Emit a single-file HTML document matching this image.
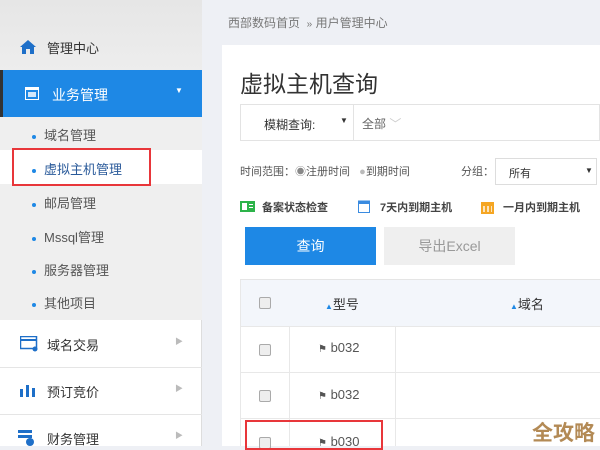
<!DOCTYPE html><html><head><meta charset="utf-8"><style>
*{margin:0;padding:0;box-sizing:border-box}
body{width:600px;height:446px;overflow:hidden;position:relative;background:#eef0f5;font-family:"Liberation Sans","Noto Sans CJK SC",sans-serif;color:#333}
.a{position:absolute}
.side{left:0;top:0;width:202px;height:446px;background:#fff;border-right:1px solid #ddd}
.sub{font-size:13px;color:#555}
.dot{display:inline-block;width:4px;height:4px;background:#1e88e5;border-radius:50%;margin-right:8px;vertical-align:middle}
.arr{color:#bbb;font-size:8px}
.cb{width:12px;height:12px;border:1px solid #aaa;border-radius:2px;background:#eee}
</style></head><body>
<div class="a side"></div>
<div class="a" style="left:0;top:0;width:202px;height:70px;background:linear-gradient(#e6e6e6,#ededed)"></div>
<svg class="a" style="left:20px;top:40px" width="16" height="14"><path d="M8 0L0 7h2v7h4V9h4v5h4V7h2z" fill="#1e6fc8"/></svg>
<div class="a" style="left:47px;top:38px;font-size:13px">管理中心</div>
<div class="a" style="left:0;top:70px;width:202px;height:47px;background:#1e88e5"></div>
<div class="a" style="left:0;top:70px;width:3px;height:47px;background:#333"></div>
<svg class="a" style="left:25px;top:87px" width="14" height="13"><rect x="0.5" y="0.5" width="13" height="12" fill="none" stroke="#fff"/><rect x="0" y="0" width="14" height="3" fill="#fff"/><rect x="3" y="5" width="8" height="5" fill="#fff" opacity=".8"/></svg>
<div class="a" style="left:52px;top:85px;font-size:14px;color:#fff">业务管理</div>
<div class="a" style="left:175px;top:86px;color:#fff;font-size:8px">▼</div>
<div class="a" style="left:0;top:117px;width:202px;height:203px;background:#efefef"></div>
<div class="a" style="left:0;top:150px;width:202px;height:34px;background:#fff"></div>
<div class="a sub" style="left:32px;top:125px"><span class="dot"></span>域名管理</div>
<div class="a sub" style="left:32px;top:159px;color:#2a5a9a"><span class="dot"></span>虚拟主机管理</div>
<div class="a sub" style="left:32px;top:193px"><span class="dot"></span>邮局管理</div>
<div class="a sub" style="left:32px;top:227px"><span class="dot"></span>Mssql管理</div>
<div class="a sub" style="left:32px;top:260px"><span class="dot"></span>服务器管理</div>
<div class="a sub" style="left:32px;top:293px"><span class="dot"></span>其他项目</div>
<div class="a" style="left:12px;top:148px;width:139px;height:38px;border:2px solid #e8363a"></div>
<div class="a" style="left:0;top:367px;width:202px;height:1px;background:#e5e5e5"></div>
<div class="a" style="left:0;top:414px;width:202px;height:1px;background:#e5e5e5"></div>
<svg class="a" style="left:20px;top:336px" width="18" height="16"><rect x="0.5" y="0.5" width="16" height="12" fill="none" stroke="#1e6fc8" stroke-width="1.5"/><rect x="1" y="3" width="15" height="2" fill="#1e6fc8"/><circle cx="15" cy="13" r="2.5" fill="#1e6fc8"/></svg>
<div class="a" style="left:47px;top:335px;font-size:13px">域名交易</div>
<div class="a arr" style="left:175px;top:336px">▶</div>
<svg class="a" style="left:20px;top:383px" width="16" height="14"><rect x="0" y="6" width="3" height="8" fill="#1e6fc8"/><rect x="6" y="2" width="3" height="12" fill="#1e6fc8"/><rect x="12" y="5" width="3" height="9" fill="#1e6fc8"/></svg>
<div class="a" style="left:47px;top:382px;font-size:13px">预订竞价</div>
<div class="a arr" style="left:175px;top:383px">▶</div>
<svg class="a" style="left:18px;top:430px" width="18" height="16"><rect x="0" y="0" width="14" height="3" fill="#1e6fc8"/><rect x="0" y="5" width="14" height="3" fill="#1e6fc8"/><circle cx="12" cy="12" r="4" fill="#1e6fc8"/></svg>
<div class="a" style="left:47px;top:429px;font-size:13px">财务管理</div>
<div class="a arr" style="left:175px;top:430px">▶</div>

<div class="a" style="left:228px;top:14px;font-size:12px;color:#777">西部数码首页 &nbsp;<span style="font-size:10px">»</span> 用户管理中心</div>
<div class="a" style="left:222px;top:45px;width:378px;height:401px;background:#fff"></div>
<div class="a" style="left:240px;top:65px;font-size:23px;color:#333">虚拟主机查询</div>
<div class="a" style="left:240px;top:104px;width:360px;height:37px;border:1px solid #e3e3e3"></div>
<div class="a" style="left:353px;top:104px;width:1px;height:37px;background:#e3e3e3"></div>
<div class="a" style="left:264px;top:116px;font-size:12px">模糊查询:</div>
<div class="a" style="left:340px;top:116px;font-size:8px">▼</div>
<div class="a" style="left:362px;top:115px;font-size:12px;color:#666">全部 <span style="color:#ccc">﹀</span></div>
<div class="a" style="left:240px;top:163px;font-size:11px;color:#555">时间范围：<span style="color:#888">◉</span>注册时间 &nbsp;&nbsp;<span style="color:#bbb">●</span>到期时间</div>
<div class="a" style="left:461px;top:163px;font-size:11px;color:#555">分组：</div>
<div class="a" style="left:495px;top:158px;width:102px;height:27px;border:1px solid #ddd"></div>
<div class="a" style="left:509px;top:165px;font-size:11px">所有</div>
<div class="a" style="left:585px;top:166px;font-size:8px">▼</div>
<svg class="a" style="left:240px;top:201px" width="15" height="11"><rect width="15" height="11" fill="#2db34a"/><rect x="2" y="2" width="5" height="7" fill="#fff"/><rect x="9" y="3" width="4" height="1" fill="#fff"/><rect x="9" y="6" width="4" height="1" fill="#fff"/></svg>
<div class="a" style="left:262px;top:199px;font-size:11px;font-weight:bold;color:#444">备案状态检查</div>
<svg class="a" style="left:358px;top:199px" width="12" height="14"><rect x="0.5" y="2" width="11" height="11.5" fill="none" stroke="#3a8be0"/><rect x="0" y="2" width="12" height="3" fill="#3a8be0"/></svg>
<div class="a" style="left:380px;top:199px;font-size:11px;font-weight:bold;color:#444">7天内到期主机</div>
<svg class="a" style="left:481px;top:200px" width="13" height="14"><rect x="0" y="2" width="13" height="12" fill="#f5a623"/><rect x="2" y="6" width="2" height="6" fill="#fff" opacity=".7"/><rect x="6" y="6" width="2" height="6" fill="#fff" opacity=".7"/><rect x="10" y="6" width="1" height="6" fill="#fff" opacity=".7"/></svg>
<div class="a" style="left:503px;top:199px;font-size:11px;font-weight:bold;color:#444">一月内到期主机</div>
<div class="a" style="left:245px;top:227px;width:131px;height:38px;background:#1e88e5;color:#fff;font-size:14px;text-align:center;line-height:38px">查询</div>
<div class="a" style="left:384px;top:227px;width:131px;height:38px;background:#efefef;color:#999;font-size:14px;text-align:center;line-height:38px">导出Excel</div>
<div class="a" style="left:240px;top:279px;width:360px;height:1px;background:#e5e5e5"></div>
<div class="a" style="left:240px;top:280px;width:360px;height:46px;background:#f3f6fb"></div>
<div class="a" style="left:240px;top:326px;width:360px;height:1px;background:#e8e8e8"></div>
<div class="a" style="left:240px;top:372px;width:360px;height:1px;background:#e8e8e8"></div>
<div class="a" style="left:240px;top:418px;width:360px;height:1px;background:#e8e8e8"></div>
<div class="a" style="left:240px;top:280px;width:1px;height:166px;background:#e8e8e8"></div>
<div class="a" style="left:289px;top:326px;width:1px;height:120px;background:#e8e8e8"></div>
<div class="a" style="left:395px;top:326px;width:1px;height:120px;background:#e8e8e8"></div>
<div class="a cb" style="left:259px;top:297px"></div>
<div class="a cb" style="left:259px;top:344px"></div>
<div class="a cb" style="left:259px;top:390px"></div>
<div class="a cb" style="left:259px;top:437px"></div>
<div class="a" style="left:325px;top:294px;font-size:13px"><span style="color:#1e88e5;font-size:8px">▲</span>型号</div>
<div class="a" style="left:510px;top:294px;font-size:13px"><span style="color:#1e88e5;font-size:8px">▲</span>域名</div>
<div class="a" style="left:318px;top:340px;font-size:13px;color:#555"><span style="font-size:10px">⚑</span> b032</div>
<div class="a" style="left:318px;top:387px;font-size:13px;color:#555"><span style="font-size:10px">⚑</span> b032</div>
<div class="a" style="left:318px;top:434px;font-size:13px;color:#555"><span style="font-size:10px">⚑</span> b030</div>
<div class="a" style="left:245px;top:420px;width:138px;height:30px;border:2px solid #e8363a"></div>
<div class="a" style="left:532px;top:417px;font-size:21px;font-weight:bold;color:#b38a55">全攻略</div>
</body></html>
